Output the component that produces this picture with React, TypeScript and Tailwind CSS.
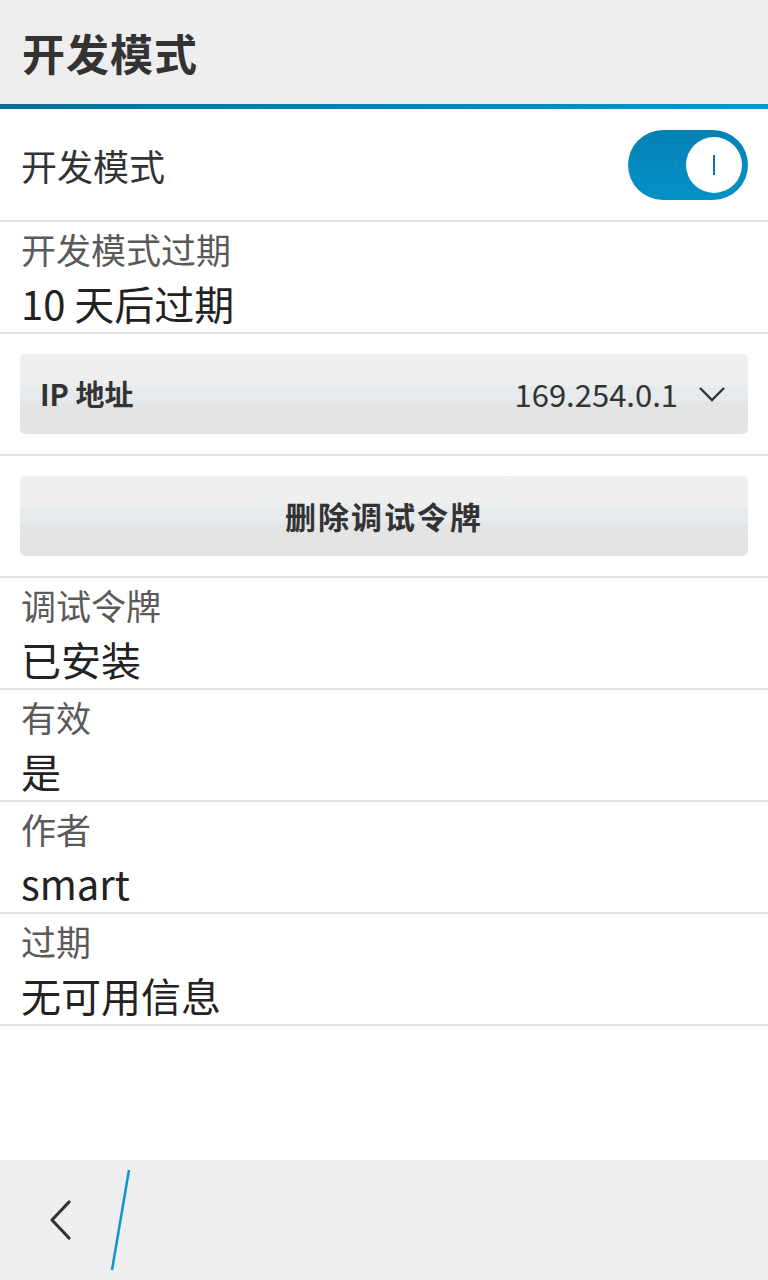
const font = { fontFamily: '"Noto Sans CJK SC", "Noto Sans", sans-serif' };

function InfoRow({ label, value }: { label: string; value: string }) {
  return (
    <div className="h-[112px] border-b-2 border-[#e3e3e3] px-[21px] pt-[1px]">
      <div className="text-[35px] leading-[51px] text-[#5a5a5a]">{label}</div>
      <div className="text-[40px] leading-[58px] text-[#222]">{value}</div>
    </div>
  );
}

function GrayButton({ children }: { children: React.ReactNode }) {
  return (
    <div className="px-5 py-[20px] border-b-2 border-[#e3e3e3]">
      <div className="h-20 rounded-[5px] bg-[linear-gradient(#efefef_0%,#eeeeee_38%,#e5eaec_42%,#e5eaec_58%,#e4e4e4_62%,#e3e3e3_100%)] flex items-center px-5">
        {children}
      </div>
    </div>
  );
}

export default function App() {
  return (
    <div className="w-[768px] h-[1280px] bg-white flex flex-col" style={font}>
      {/* Title bar */}
      <div className="h-[104px] bg-[#eeeeee] flex items-center px-[22px]">
        <h1 className="text-[43px] font-bold text-[#333] tracking-[1px]">开发模式</h1>
      </div>
      <div className="h-[5px] bg-[linear-gradient(90deg,#0a6e97,#0097d1)]" />

      {/* Toggle row */}
      <div className="h-[113px] border-b-2 border-[#e3e3e3] flex items-center justify-between pl-[21px] pr-5">
        <span className="text-[36px] text-[#333]">开发模式</span>
        <div className="w-[120px] h-[70px] rounded-full bg-[linear-gradient(#0581b3,#0392c8)] flex items-center justify-end pr-[6px]">
          <div className="w-[56px] h-[56px] rounded-full bg-white flex items-center justify-center">
            <div className="w-[2px] h-[20px] bg-[#0a76a5]" />
          </div>
        </div>
      </div>

      <InfoRow label="开发模式过期" value="10 天后过期" />

      <GrayButton>
        <span className="text-[29px] font-bold text-[#333]">IP 地址</span>
        <span className="ml-auto text-[31px] text-[#333]">169.254.0.1</span>
        <svg className="ml-[20px] mr-[2px]" width="28" height="18" viewBox="0 0 28 18">
          <path d="M2 3 L14 15 L26 3" fill="none" stroke="#333" strokeWidth="2.4" />
        </svg>
      </GrayButton>

      <GrayButton>
        <span className="w-full text-center text-[31px] font-bold text-[#333] tracking-[2px]">删除调试令牌</span>
      </GrayButton>

      <InfoRow label="调试令牌" value="已安装" />
      <InfoRow label="有效" value="是" />
      <InfoRow label="作者" value="smart" />
      <InfoRow label="过期" value="无可用信息" />

      <div className="flex-1" />

      {/* Bottom action bar */}
      <div className="h-[120px] bg-[#eeeeee] relative flex items-center pl-[48px]">
        <svg width="24" height="42" viewBox="0 0 24 42">
          <path d="M21 3 L4 21 L21 39" fill="none" stroke="#333" strokeWidth="3.2" strokeLinecap="round" strokeLinejoin="round" />
        </svg>
        <svg className="absolute left-[108px] top-[8px]" width="26" height="104" viewBox="0 0 26 104">
          <line x1="21" y1="2" x2="4" y2="102" stroke="#0a96d2" strokeWidth="2.5" />
        </svg>
      </div>
    </div>
  );
}
